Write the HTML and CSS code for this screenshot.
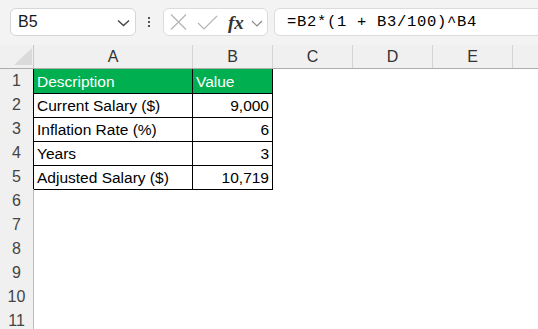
FILE: index.html
```html
<!DOCTYPE html>
<html lang="en">
<head>
  <meta charset="UTF-8">
  <meta name="viewport" content="width=device-width, initial-scale=1.0">
  <link rel="stylesheet" href="styles.css">
  <title>Adjusted Salary</title>
</head>
<body>
  <div class="toolbar">
    <div class="name-box">
      <span>B5</span>
      <svg class="chev" width="13" height="8" viewBox="0 0 13 8"><path d="M1 1.5 L6.5 6.5 L12 1.5" fill="none" stroke="#444" stroke-width="1.4"/></svg>
    </div>
    <div class="grip"><i></i><i></i><i></i></div>
    <div class="fx-box">
      <svg width="17" height="16" viewBox="0 0 17 16"><path d="M1 0.5 L16 15.5 M16 0.5 L1 15.5" stroke="#b4b4b4" stroke-width="1.2"/></svg>
      <svg width="21" height="15" viewBox="0 0 21 15"><path d="M1 8 L7 14 L20 1" fill="none" stroke="#b4b4b4" stroke-width="1.2"/></svg>
      <span class="fx">fx</span>
      <svg width="12" height="7" viewBox="0 0 12 7"><path d="M1 1 L6 6 L11 1" fill="none" stroke="#888" stroke-width="1.2"/></svg>
    </div>
    <div class="formula">=B2*(1 + B3/100)^B4</div>
  </div>

  <div class="sheet">
    <div class="row col-heads">
      <div class="corner"><svg width="18" height="17" viewBox="0 0 18 17"><path d="M0 17 L18 17 L18 0 Z" fill="#dadada"/></svg></div>
      <div class="ch">A</div>
      <div class="ch">B</div>
      <div class="ch">C</div>
      <div class="ch">D</div>
      <div class="ch">E</div>
      <div class="ch last"></div>
    </div>

    <div class="row t">
      <div class="rh">1</div>
      <div class="cell head">Description</div>
      <div class="cell head">Value</div>
    </div>
    <div class="row t">
      <div class="rh">2</div>
      <div class="cell">Current Salary ($)</div>
      <div class="cell num">9,000</div>
    </div>
    <div class="row t">
      <div class="rh">3</div>
      <div class="cell">Inflation Rate (%)</div>
      <div class="cell num">6</div>
    </div>
    <div class="row t">
      <div class="rh">4</div>
      <div class="cell">Years</div>
      <div class="cell num">3</div>
    </div>
    <div class="row t">
      <div class="rh">5</div>
      <div class="cell">Adjusted Salary ($)</div>
      <div class="cell num">10,719</div>
    </div>
    <div class="row"><div class="rh">6</div></div>
    <div class="row"><div class="rh">7</div></div>
    <div class="row"><div class="rh">8</div></div>
    <div class="row"><div class="rh">9</div></div>
    <div class="row"><div class="rh">10</div></div>
    <div class="row"><div class="rh">11</div></div>
  </div>
</body>
</html>
```

FILE: styles.css
```css
body {
  margin: 0;
  width: 538px;
  height: 329px;
  overflow: hidden;
  background-color: #fff;
  font-family: "Liberation Sans", Arial, sans-serif;
  color: #000;
}

.toolbar {
  display: flex;
  align-items: flex-start;
  height: 45px;
  box-sizing: border-box;
  padding: 8px 0 0 10px;
  background-color: #f3f3f3;
}

.name-box {
  display: flex;
  align-items: center;
  justify-content: space-between;
  width: 126px;
  height: 28px;
  box-sizing: border-box;
  padding: 0 5px 0 7px;
  background-color: #fff;
  border: 1px solid #d6d6d6;
  border-radius: 6px;
  font-size: 16px;
  color: #1a1a1a;
}

.name-box .chev {
  margin-top: 1px;
}

.grip {
  display: flex;
  flex-direction: column;
  gap: 2px;
  margin: 9px 0 0 12px;
}

.grip i {
  display: block;
  width: 2px;
  height: 2px;
  background-color: #555;
}

.fx-box {
  display: flex;
  align-items: center;
  width: 105px;
  height: 28px;
  box-sizing: border-box;
  margin-left: 13px;
  padding-left: 6px;
  background-color: #fff;
  border: 1px solid #dcdcdc;
  border-radius: 6px;
}

.fx-box svg:nth-child(2) {
  margin-left: 10px;
}

.fx {
  margin-left: 10px;
  font-family: "Liberation Serif", "Times New Roman", serif;
  font-style: italic;
  font-weight: bold;
  font-size: 19px;
  color: #333;
  line-height: 1;
}

.fx-box svg:last-child {
  margin-left: 7px;
  margin-top: 2px;
}

.formula {
  flex: 1;
  height: 28px;
  box-sizing: border-box;
  margin-left: 6px;
  margin-right: -12px;
  padding-left: 12px;
  background-color: #fff;
  border: 1px solid #dcdcdc;
  border-radius: 6px;
  font-family: "Liberation Mono", "Courier New", monospace;
  font-size: 15.5px;
  letter-spacing: 0.7px;
  line-height: 26px;
  white-space: pre;
}

.row {
  display: grid;
  grid-template-columns: 34px 159px 80px 80px 80px 80px 1fr;
  height: 24px;
}

.col-heads {
  background-color: #f0f0f0;
  border-bottom: 1px solid #adadad;
  box-sizing: border-box;
}

.corner {
  position: relative;
  border-right: 1px solid #c8c8c8;
}

.corner svg {
  position: absolute;
  left: 14px;
  top: 3px;
}

.ch {
  border-right: 1px solid #d4d4d4;
  text-align: center;
  font-size: 16px;
  line-height: 23px;
  color: #333;
}

.ch.last {
  border-right: none;
}

.rh {
  box-sizing: border-box;
  background-color: #f0f0f0;
  border-right: 1px solid #bdbdbd;
  border-bottom: 1px solid #d9d9d9;
  text-align: center;
  font-size: 16px;
  line-height: 24px;
  color: #444;
}

.row.t .rh {
  border-right-color: #000;
}

.cell {
  box-sizing: border-box;
  padding: 2px 3px 0 3px;
  border-right: 1px solid #000;
  border-bottom: 1px solid #000;
  font-size: 15.5px;
  line-height: 22px;
  white-space: nowrap;
  overflow: hidden;
}

.cell.head {
  background-color: #00b050;
  color: #fff;
}

.cell.num {
  text-align: right;
}
```
